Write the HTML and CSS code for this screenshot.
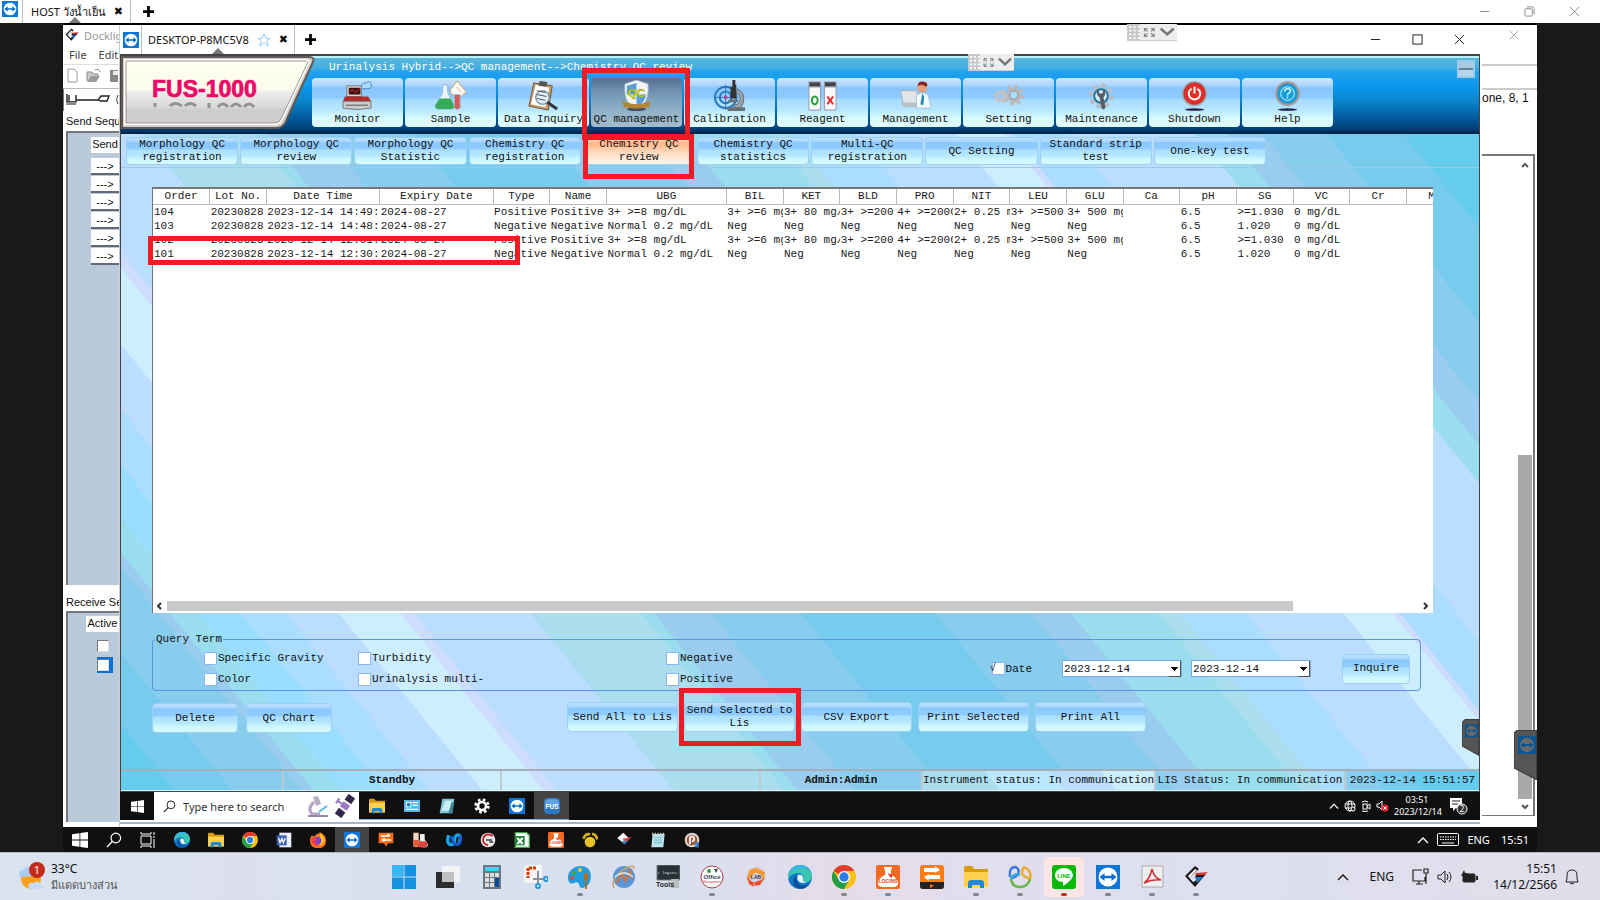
FILE: index.html
```html
<!DOCTYPE html>
<html lang="en">
<head>
<meta charset="utf-8">
<title>FUS-1000 Chemistry QC review</title>
<link rel="stylesheet" href="styles.css">
</head>
<body>
<svg class="defs" aria-hidden="true">
  <symbol id="tv" viewBox="0 0 24 24"><rect width="24" height="24" fill="#0a76d8"/><circle cx="12" cy="12" r="9.5" fill="#fff"/><path d="M3.5 12l5-4v2.7h7V8l5 4-5 4v-2.7h-7V16z" fill="#0a6fd0"/></symbol>
  <symbol id="tvdim" viewBox="0 0 24 24"><rect width="24" height="24" fill="#0b5591"/><circle cx="12" cy="12" r="9.5" fill="#6a6a6a"/><path d="M3.5 12l5-4v2.7h7V8l5 4-5 4v-2.7h-7V16z" fill="#0b5591"/></symbol>
  <symbol id="win10" viewBox="0 0 16 16"><path d="M0 2.3L7.5 1.2V7.6H0zM8.3 1.1L16 0v7.6H8.3zM0 8.4h7.5v6.4L0 13.7zM8.3 8.4H16V16l-7.7-1.1z" fill="#fff"/></symbol>
  <symbol id="search" viewBox="0 0 16 16"><circle cx="9.8" cy="6" r="4.8" fill="none" stroke="currentColor" stroke-width="1.2"/><path d="M6.3 9.5L1 15" stroke="currentColor" stroke-width="1.3"/></symbol>
  <symbol id="folder" viewBox="0 0 24 24"><path d="M0 3q0-2 2-2h6l2 3h14v6H0z" fill="#d99b0a"/><path d="M0 7h24v15H0z" fill="#ffd04c"/><path d="M4 23v-5q0-3 3-3h10q3 0 3 3v5h-4v-3H8v3z" fill="#2387d8"/></symbol>
  <symbol id="edge" viewBox="0 0 24 24"><circle cx="12" cy="12" r="12" fill="#1479c9"/><path d="M0 11C1 4 6 0 12 0c7 0 12 5 12 11 0 4-3 6-7 6-2 0-3-1-2-2 2-4-1-7-5-7-5 0-9 3-10 7z" fill="#3ac6b0"/><path d="M1 9C3 3 8 0 13 0c6 0 9 4 10 7-5-5-15-5-22 2z" fill="#38b5e6"/><path d="M9 10c-2 5 1 12 9 10 2 0 3-1 4-2-3 5-8 7-13 5C4 20 4 13 9 10z" fill="#0d4f9c"/><path d="M10 10c3-1 6 1 5 4-1 2 1 3 4 3-5 3-12-1-9-7z" fill="#e5f3fb"/></symbol>
  <symbol id="chrome" viewBox="0 0 24 24"><circle cx="12" cy="12" r="12" fill="#fbc116"/><path d="M12 12L1.6 6A12 12 0 0 1 22.4 6H12z" fill="#e33b2e"/><path d="M1.6 6A12 12 0 0 0 12 24l5.2-9L12 12 6 13.5z" fill="#22a047"/><circle cx="12" cy="12" r="6" fill="#fff"/><circle cx="12" cy="12" r="4.7" fill="#2f7de9"/></symbol>
  <symbol id="logins" viewBox="0 0 24 24"><rect width="24" height="24" rx="2" fill="#f4691e"/><path d="M8 2h8v2h-1v6q7 3 7 8 0 4-5 4H7q-5 0-5-4 0-5 7-8V4H8z" fill="#fff"/><path d="M12 8l4 2v3l-3-2z" fill="#d33"/><text x="12" y="18" text-anchor="middle" font-size="5" font-weight="700" font-family="Liberation Sans" fill="#d8461a">LOGINS</text></symbol>
  <symbol id="docklight" viewBox="0 0 24 24"><path d="M11 1l4 3-9 8 4 5 5-5h-4l2-3h9l-11 13L1 11z" fill="#181818"/><path d="M11 4l2 1-7 7 4 4-1 1-5-6z" fill="#fff"/><path d="M12 8l12-1-4 3h-9z" fill="#dc3a32"/><path d="M11 12h8l-6 6z" fill="#2d77bd"/></symbol>
  <symbol id="transfer" viewBox="0 0 24 24"><rect width="24" height="24" rx="3" fill="#ff7d17"/><path d="M0 17h24v4q0 3-3 3H3q-3 0-3-3z" fill="#222"/><path d="M4 3h11V1l5 4-5 3V7H4zM20 14H9v2l-5-4 5-3v1h11z" fill="#fff"/><path d="M10 19l4 2-4 2z" fill="#f62"/></symbol>
  <symbol id="gear" viewBox="0 0 24 24"><circle cx="12" cy="12" r="6" fill="none" stroke="currentColor" stroke-width="4"/><circle cx="12" cy="12" r="9.5" fill="none" stroke="currentColor" stroke-width="4" stroke-dasharray="4 3.46"/></symbol>
  <symbol id="up" viewBox="0 0 12 8"><path d="M1 7l5-5 5 5" fill="none" stroke="currentColor" stroke-width="1.3"/></symbol>
  <symbol id="note" viewBox="0 0 24 24"><path d="M5 1h18l-3 22H1z" fill="#7fc8d8"/><path d="M9 4h12l-3 15H4z" fill="#c9edf2"/><path d="M19 6l4 0-3 17h-6z" fill="#3d8596"/></symbol>
  <symbol id="grip" viewBox="0 0 46 17"><path d="M0 0h46v17H0z" fill="#ededed"/><path d="M0 0h12v17H0z" fill="#c9c9c9"/><g stroke="#fff" stroke-width="2" stroke-dasharray="2 2"><path d="M2 3h10M2 7h10M2 11h10M2 15h10"/></g><path d="M16 8V5h3M22 5h3v3M25 10v3h-3M19 13h-3v-3M16 5l3 3M25 5l-3 3M25 13l-3-3M16 13l3-3" fill="none" stroke="#777"/><path d="M31 5l6 6 6-6" fill="none" stroke="#777" stroke-width="2.5"/></symbol>
</svg>

<header class="tvbar outer">
  <svg class="tvicon"><use href="#tv"/></svg>
  <div class="session host"><span>HOST วังน้ำเย็น</span><button class="x" aria-label="Close tab">✖</button></div>
  <button class="plus" aria-label="New tab"><svg viewBox="0 0 12 12"><path d="M6 0v12M0 6h12" stroke="#000" stroke-width="3"/></svg></button>
  <div class="wincontrols grey">
    <svg viewBox="0 0 12 12"><path d="M1 6h10"/></svg>
    <svg viewBox="0 0 12 12"><rect x="1" y="3" width="8" height="8" rx="1"/><path d="M3 1h6q2 0 2 2v6"/></svg>
    <svg viewBox="0 0 12 12"><path d="M1 1l10 10M11 1L1 11"/></svg>
  </div>
</header>

<main class="remote">
  <svg class="float first" viewBox="0 0 46 17" preserveAspectRatio="none"><use href="#grip"/></svg>
  <div class="desk">
    <aside class="dockleft">
      <div class="docktitle"><svg><use href="#docklight"/></svg><span>Docklight</span></div>
      <nav class="dockmenu"><span>File</span><span>Edit</span></nav>
      <div class="docktools">
        <svg width="52" height="16" viewBox="0 0 52 16"><path d="M2 1h6l3 3v10H2z" fill="#fff" stroke="#999"/><path d="M21 13V4h5l1 2h5v2" fill="#ccc" stroke="#888"/><path d="M21 14l4-6h9l-4 6z" fill="#999"/><path d="M29 2q4-2 5 2" fill="none" stroke="#888"/><path d="M44 2h8v12h-7l-1-1z" fill="#888"/><path d="M47 3h5v4h-5z" fill="#eee"/></svg>
      </div>
      <div class="dockconn"><svg width="56" height="16" viewBox="0 0 56 16"><path d="M3 2v8h9V3M5 3v6M12 8h22M34 8l3-4h8l-2 5h-6z" fill="none" stroke="#222" stroke-width="1.4"/><path d="M3 10h9v3H2z" fill="#888"/><path d="M54 3q-3 5 0 9" stroke="#444" fill="none"/></svg></div>
      <h2>Send Sequences</h2>
      <div class="well send">
        <div class="cell">Send</div>
        <button>---&gt;</button><button>---&gt;</button><button>---&gt;</button><button>---&gt;</button><button>---&gt;</button><button>---&gt;</button>
      </div>
      <h2 class="rec">Receive Sequences</h2>
      <div class="well receive">
        <div class="cell">Active</div>
        <input type="checkbox" aria-label="Sequence 1 active"><input type="checkbox" class="sel" aria-label="Sequence 2 active">
      </div>
    </aside>

    <section class="inner">
      <header class="tvbar">
        <svg class="tvicon"><use href="#tv"/></svg>
        <div class="session desktop"><span>DESKTOP-P8MC5V8</span><svg class="star" viewBox="0 0 16 16"><path d="M8 1l2 5h5l-4 3 2 6-5-4-5 4 2-6-4-3h5z" fill="none" stroke="#85c1ef"/></svg><button class="x" aria-label="Close tab">✖</button></div>
        <button class="plus" aria-label="New tab"><svg viewBox="0 0 12 12"><path d="M6 0v12M0 6h12" stroke="#000" stroke-width="3"/></svg></button>
        <div class="wincontrols">
          <svg viewBox="0 0 12 12"><path d="M1 6h10"/></svg>
          <svg viewBox="0 0 12 12"><rect x="1" y="1" width="10" height="10"/></svg>
          <svg viewBox="0 0 12 12"><path d="M1 1l10 10M11 1L1 11"/></svg>
        </div>
      </header>

      <div class="app">
        <svg class="float second" viewBox="0 0 46 17" preserveAspectRatio="none"><use href="#grip"/></svg>
        <div class="head">
          <svg class="logo" viewBox="0 0 194 74" role="img" aria-label="FUS-1000">
            <defs><linearGradient id="lg" x2="0" y2="1"><stop offset="0" stop-color="#fffff4"/><stop offset=".47" stop-color="#fbfbe8"/><stop offset=".5" stop-color="#ececec"/><stop offset=".74" stop-color="#d8d8d8"/><stop offset=".77" stop-color="#cdcdcd"/><stop offset="1" stop-color="#cfcfcf"/></linearGradient></defs>
            <path d="M1 1h187q6 0 4 5l-28 61q-3 5-9 5H1z" fill="#d4d0cc" stroke="#5f5a58" stroke-width="2"/>
            <path d="M4 4h181q4 0 2 4l-26 55q-2 5-7 5H4z" fill="url(#lg)" stroke="#fff" stroke-width="2"/>
            <path d="M5 5h179q4 0 2 3l-26 55q-2 4-6 4H5z" fill="none" stroke="#867e7b" stroke-width=".8"/>
            <text x="31" y="41" font-size="23" font-weight="700" font-family="Liberation Sans, sans-serif" fill="#ec0868" stroke="#ec0868" stroke-width=".7">FUS-1000</text>
            <path d="M34 47v4M49 50q5-5 12 0M64 50q5-5 11 0M88 47v5M97 51q5-6 10 0M110 51q5-6 10 0M123 51q5-6 10 0" fill="none" stroke="#929292" stroke-width="3"/>
          </svg>
          <div class="headmain">
            <p class="crumb">Urinalysis Hybrid--&gt;QC management--&gt;Chemistry QC review</p>
            <nav class="mainnav">
              <button><svg viewBox="0 0 32 32"><path d="M20 7q1-5 5-4 4-3 5 1 2 4-3 5h-6" fill="#a7dcff" stroke="#468ac0"/><path d="M5 6h15v11H5z" fill="#d8d8d8" stroke="#777"/><path d="M7 8h12v7H7z" fill="#3b1010"/><path d="M8 12l3-2 3 3 4-4" stroke="#f22" fill="none"/><path d="M3 17h24l3 5H1z" fill="#b32a2a"/><path d="M1 22h29v7q-14 3-29 0z" fill="#ccc" stroke="#777"/><path d="M4 26h23" stroke="#555"/></svg>Monitor</button>
              <button><svg viewBox="0 0 32 32"><path d="M16 10l7-9 9 11-8 8-8-7z" fill="#fff" stroke="#d59c4b"/><path d="M22 7l5 6" stroke="#e2a75d"/><path d="M8 5h5v8l7 13q0 4-4 4H3q-4-1-2-5l7-12z" fill="#e9f5fb" stroke="#8abbdc"/><path d="M5 19h11l4 8q-1 3-4 3H3q-4-1-2-5z" fill="#35ac57"/><path d="M20 15h6v14q-3 3-6 0z" fill="#d65955" stroke="#9fbcd0"/></svg>Sample</button>
              <button><svg viewBox="0 0 32 32"><path d="M6 3l19 3-4 25L1 27z" fill="#c99d66" stroke="#765433"/><path d="M8 5l14 3-4 20L3 25z" fill="#fff"/><path d="M12 1l8 1-1 5-8-1z" fill="#555"/><circle cx="15" cy="18" r="7" fill="#e3f0fc" stroke="#8399ad" stroke-width="1.5"/><path d="M9 11l9 2M9 15l10 2M9 19l9 2" stroke="#456"/><path d="M20 23l10 7" stroke="#333" stroke-width="3"/></svg>Data Inquiry</button>
              <button class="on marked"><svg viewBox="0 0 32 32"><ellipse cx="16" cy="30" rx="10" ry="2" fill="#44505a"/><path d="M16 0l12 4q1 15-4 20-3 4-8 5-6-2-9-6Q3 17 4 4z" fill="#f4f7fa" stroke="#9daab6"/><path d="M16 3v12H6V6zM16 15h10q-1 9-10 12z" fill="#5a9fdb"/><path d="M1 22l5 1q10 4 20 0l5-1-2 4 1 3-5-1q-9 3-18 0l-5 1 1-3z" fill="#b68432"/><text x="16" y="18" text-anchor="middle" font-size="12" font-weight="700" font-family="Liberation Sans" fill="#d8de18" stroke="#879015" stroke-width=".4">QC</text></svg>QC management</button>
              <button><svg viewBox="0 0 32 32"><g fill="none" stroke="#2878bd"><circle cx="12" cy="18" r="11" stroke-width="2"/><circle cx="12" cy="18" r="6" stroke-width="2"/><path d="M12 5v26M0 18h25"/></g><circle cx="12" cy="18" r="2" fill="#b147a0"/><path d="M19 0h3v5h1v14h-6V7h2z" fill="#333"/><path d="M24 9q9 5 6 15-1 4-4 5h-5v-3q6-1 6-7 0-4-4-6z" fill="#9ba5ad" stroke="#606970"/><path d="M15 20h10v3H15zM14 28h18v4H14z" fill="#667078"/></svg>Calibration</button>
              <button><svg viewBox="0 0 32 32"><g stroke="#99a"><path d="M2 7h12v24H2zM18 7h12v24H18z" fill="#f8f8f8"/><path d="M2 2h12v5H2zM18 2h12v5H18z" fill="#444"/></g><ellipse cx="8" cy="21" rx="3" ry="4" fill="none" stroke="#20a034" stroke-width="2"/><path d="M21 17l6 8M27 17l-6 8" stroke="#e22323" stroke-width="2"/></svg>Reagent</button>
              <button><svg viewBox="0 0 32 32"><path d="M1 11h16l3 13H3z" fill="#e2e5e8" stroke="#aab0b4"/><path d="M0 24h18l3 4H5z" fill="#b8c0c7"/><circle cx="23" cy="8" r="5" fill="#e4a07d"/><path d="M18 6q1-6 8-4 4 2 1 5l-4-2z" fill="#8c241c"/><path d="M17 16q5-5 12-1l3 14H17z" fill="#f3faff" stroke="#a9c3d4"/><path d="M23 14l2 3-1 9-3-1z" fill="#278cb4"/></svg>Management</button>
              <button><svg viewBox="0 0 38 32"><g color="#b9b9b9"><use href="#gear" x="12" y="2" width="27" height="27"/></g><g color="#c4c4c4"><use href="#gear" x="0" y="8" width="18" height="18"/></g><circle cx="25.5" cy="15.500" r="5" fill="#aedcff" stroke="#888"/></svg>Setting</button>
              <button><svg viewBox="0 0 32 32"><g color="#b7bec6"><use href="#gear" x="2" y="3" width="27" height="27"/></g><circle cx="15.500" cy="16.500" r="7" fill="#d8eeff" stroke="#1778a4" stroke-width="2"/><path d="M12 9l2 5h3l1-5q4 5 0 9l2 10q-2 4-4 1l-2-11q-5-4-2-9z" fill="#555c64"/></svg>Maintenance</button>
              <button><svg viewBox="0 0 32 32"><ellipse cx="16" cy="30.500" rx="10" ry="1.300" fill="#224"/><circle cx="16" cy="14" r="13" fill="#a5a5ab"/><circle cx="16" cy="14" r="11" fill="#e52c28" stroke="#ad3431"/><path d="M13 9a6 6 0 1 0 6 0M16 7v7" fill="none" stroke="#fff" stroke-width="2"/></svg>Shutdown</button>
              <button><svg viewBox="0 0 32 32"><ellipse cx="16" cy="30.500" rx="10" ry="1.300" fill="#224"/><circle cx="16" cy="14" r="13" fill="#a5a5ab"/><circle cx="16" cy="14" r="11" fill="#149edb" stroke="#b98575"/><circle cx="16" cy="14" r="7" fill="none" stroke="#d7f6ff"/><path d="M13 12q0-3 3-3 4 0 3 3l-3 3v1M16 17v2" fill="none" stroke="#d7f6ff" stroke-width="1.500"/></svg>Help</button>
            </nav>
          </div>
          <button class="mini" aria-label="Minimise"></button>
        </div>

        <nav class="subnav">
          <button>Morphology QC registration</button><button>Morphology QC review</button><button>Morphology QC Statistic</button><button>Chemistry QC registration</button><button class="on marked">Chemistry QC review</button><button>Chemistry QC statistics</button><button>Multi-QC registration</button><button>QC Setting</button><button>Standard strip test</button><button>One-key test</button>
        </nav>

        <div class="work">
          <div class="list">
            <div class="rowmark"></div>
            <div class="scroller">
            <table>
              <colgroup><col class="n"><col class="n"><col class="w"><col class="w"><col class="n"><col class="n"><col class="u"><col class="n" span="13"></colgroup>
              <thead><tr><th>Order</th><th>Lot No.</th><th>Date Time</th><th>Expiry Date</th><th>Type</th><th>Name</th><th>UBG</th><th>BIL</th><th>KET</th><th>BLD</th><th>PRO</th><th>NIT</th><th>LEU</th><th>GLU</th><th>Ca</th><th>pH</th><th>SG</th><th>VC</th><th>Cr</th><th>MA</th></tr></thead>
              <tbody>
                <tr><td>104</td><td>20230828</td><td>2023-12-14 14:49:0</td><td>2024-08-27</td><td>Positive</td><td>Positive</td><td>3+ &gt;=8 mg/dL</td><td>3+ &gt;=6 mg</td><td>3+ 80 mg/</td><td>3+ &gt;=200</td><td>4+ &gt;=2000</td><td>2+ 0.25 m</td><td>3+ &gt;=500</td><td>3+ 500 mg</td><td></td><td>6.5</td><td>&gt;=1.030</td><td>0 mg/dL</td><td></td><td></td></tr>
                <tr><td>103</td><td>20230828</td><td>2023-12-14 14:48:1</td><td>2024-08-27</td><td>Negative</td><td>Negative</td><td>Normal 0.2 mg/dL</td><td>Neg</td><td>Neg</td><td>Neg</td><td>Neg</td><td>Neg</td><td>Neg</td><td>Neg</td><td></td><td>6.5</td><td>1.020</td><td>0 mg/dL</td><td></td><td></td></tr>
                <tr><td>102</td><td>20230828</td><td>2023-12-14 12:31:0</td><td>2024-08-27</td><td>Positive</td><td>Positive</td><td>3+ &gt;=8 mg/dL</td><td>3+ &gt;=6 mg</td><td>3+ 80 mg/</td><td>3+ &gt;=200</td><td>4+ &gt;=2000</td><td>2+ 0.25 m</td><td>3+ &gt;=500</td><td>3+ 500 mg</td><td></td><td>6.5</td><td>&gt;=1.030</td><td>0 mg/dL</td><td></td><td></td></tr>
                <tr><td>101</td><td>20230828</td><td>2023-12-14 12:30:3</td><td>2024-08-27</td><td>Negative</td><td>Negative</td><td>Normal 0.2 mg/dL</td><td>Neg</td><td>Neg</td><td>Neg</td><td>Neg</td><td>Neg</td><td>Neg</td><td>Neg</td><td></td><td>6.5</td><td>1.020</td><td>0 mg/dL</td><td></td><td></td></tr>
              </tbody>
            </table>
            </div>
            <div class="hbar"><svg viewBox="0 0 6 8"><path d="M5 1L2 4l3 3"/></svg><div class="track"><div class="thumb"></div></div><svg viewBox="0 0 6 8"><path d="M1 1l3 3-3 3"/></svg></div>
          </div>

          <fieldset class="query">
            <legend>Query Term</legend>
            <div class="checks">
              <label><input type="checkbox">Specific Gravity</label><label><input type="checkbox">Turbidity</label><label><input type="checkbox">Negative</label>
              <label><input type="checkbox">Color</label><label><input type="checkbox">Urinalysis multi-</label><label><input type="checkbox">Positive</label>
            </div>
            <label class="datecheck"><input type="checkbox" checked>Date</label>
            <div class="pick"><select aria-label="From date"><option>2023-12-14</option></select></div>
            <div class="pick"><select aria-label="To date"><option>2023-12-14</option></select></div>
            <button class="glossy inquire">Inquire</button>
          </fieldset>

          <div class="actions">
            <div class="group small"><button class="glossy">Delete</button><button class="glossy">QC Chart</button></div>
            <div class="group big"><button class="glossy">Send All to Lis</button><button class="glossy marked">Send Selected to Lis</button><button class="glossy">CSV Export</button><button class="glossy">Print Selected</button><button class="glossy">Print All</button></div>
          </div>
        </div>
        <svg class="sidetab small" viewBox="0 0 18 38"><path d="M18 0H3L0 3v25l18 10z" fill="#555" stroke="#333"/><use href="#tvdim" x="3" y="5" width="14" height="14"/></svg>

        <footer class="status"><span></span><b>Standby</b><span></span><b>Admin:Admin</b><span class="s1">Instrument status: In communication</span><span>LIS Status: In communication</span><span class="s2">2023-12-14 15:51:57</span></footer>
      </div>

      <div class="bar10 inner10">
        <button class="start" aria-label="Start"><svg width="13" height="13"><use href="#win10"/></svg></button>
        <label class="searchbox"><svg width="13" height="13"><use href="#search"/></svg><input type="text" placeholder="Type here to search" aria-label="Search">
          <svg width="52" height="24" viewBox="0 0 52 24"><path d="M8 3l5-1 3 8-5 2z" fill="#b8abc4"/><path d="M9 8q-7 6-2 12h8" fill="none" stroke="#b7a6c8" stroke-width="3"/><path d="M3 21h20v2H3z" fill="#9885aa"/><path d="M14 18l8-6" stroke="#56bde9" stroke-width="2"/><g transform="rotate(35 40 12)"><path d="M36 0h8v7h-8zM36 17h8v7h-8z" fill="#35264c"/><path d="M36 9h8v6h-8z" fill="#9a77c4"/><path d="M36 12h-4M31 9v6" stroke="#9a77c4" stroke-width="2"/></g></svg></label>
        <div class="apps">
          <i class="open"><svg><use href="#folder"/></svg></i>
          <i class="open"><svg viewBox="0 0 24 24"><path d="M0 3h24v18H0z" fill="#54b8f0"/><path d="M3 6h8v8H3z" fill="#fff"/><circle cx="7" cy="10" r="3" fill="#247cc0"/><path d="M13 7h8M13 11h8M3 17h18" stroke="#fff" stroke-width="2"/></svg></i>
          <i class="open"><svg><use href="#note"/></svg></i>
          <i class="open white"><svg><use href="#gear"/></svg></i>
          <i class="open"><svg><use href="#tv"/></svg></i>
          <i class="open active"><svg viewBox="0 0 24 24"><rect width="24" height="24" rx="6" fill="#2f78c8"/><path d="M2 11q10 6 20 0V5q-1-3-4-3H6Q3 2 2 5z" fill="#60a5e3"/><text x="12" y="16" text-anchor="middle" font-size="10" font-weight="700" font-family="Liberation Sans" fill="#fff">FUS</text></svg></i>
        </div>
        <div class="tray">
          <svg width="10" height="8"><use href="#up"/></svg>
          <svg width="12" height="12" viewBox="0 0 12 12" fill="none" stroke="#fff"><circle cx="6" cy="6" r="5"/><ellipse cx="6" cy="6" rx="2" ry="5"/><path d="M1 4h10M1 8h10"/><circle cx="9" cy="9" r="2" fill="#222"/></svg>
          <svg width="10" height="12" viewBox="0 0 10 12" fill="none" stroke="#fff"><rect x="2" y="4" width="4" height="5"/><path d="M6 6l3-2v5L6 7M1 2q3-2 6 0M1 11q3 1 6 0"/></svg>
          <svg width="13" height="12" viewBox="0 0 13 12"><path d="M1 4h2l3-3v9L3 7H1z" fill="none" stroke="#fff"/><circle cx="9" cy="8" r="3.5" fill="#e22"/><path d="M7.5 6.500l3 3m0-3l-3 3" stroke="#fff"/></svg>
          <time>03:51<br>2023/12/14</time>
          <svg class="bubble" width="20" height="20" viewBox="0 0 20 20"><path d="M2 2h12v10H8l-3 3v-3H2z" fill="#fff"/><path d="M4 5h8M4 8h6" stroke="#222"/><circle cx="14" cy="13" r="5" fill="#333" stroke="#fff"/><text x="14" y="16" text-anchor="middle" font-size="8" fill="#fff" font-family="Noto Sans">2</text></svg>
        </div>
      </div>
      <div class="under"></div>
    </section>

    <aside class="dockright">
      <div class="closeline"><svg viewBox="0 0 12 12"><path d="M1 1l10 10M11 1L1 11"/></svg></div>
      <div class="lines"></div>
      <p>one, 8, 1</p>
      <div class="vwell"><svg viewBox="0 0 8 6"><path d="M1 5l3-3 3 3"/></svg><div class="vtrack"><div class="vthumb"></div></div><svg viewBox="0 0 8 6"><path d="M1 1l3 3 3-3"/></svg></div>
      <svg class="sidetab" viewBox="0 0 23 50"><path d="M23 0H3L0 3v35l23 12z" fill="#555" stroke="#333"/><use href="#tvdim" x="4" y="6" width="18" height="18"/></svg>
    </aside>
  </div>

  <div class="bar10 outer10">
    <div class="apps">
      <i><svg><use href="#win10"/></svg></i>
      <i class="white"><svg><use href="#search"/></svg></i>
      <i><svg viewBox="0 0 16 16" fill="none" stroke="#fff"><path d="M1 4h10v8H1zM1 0v2h10V0M1 16v-2h10v2M14 0v3M14 7v9"/><path d="M13 5h2"/></svg></i>
      <i><svg><use href="#edge"/></svg></i><i><svg><use href="#folder"/></svg></i><i><svg><use href="#chrome"/></svg></i>
      <i><svg viewBox="0 0 24 24"><path d="M5 1h18v22H5z" fill="#e8eefb"/><path d="M1 5h15v15H1z" fill="#3c62b0"/><path d="M4 9l2 7 3-6 2 6 3-7M17 6h4M17 10h4M17 14h4" fill="none" stroke="#fff" stroke-width="2"/></svg></i>
      <i><svg viewBox="0 0 24 24"><path d="M3 5l3 2q4-5 9-5l-1-2q10 4 10 13 0 11-12 11T0 13q0-5 3-8z" fill="#ff7a1c"/><path d="M14 1q9 6 7 14-2 5-9 5-3-2 3-4 4-3 0-8z" fill="#ffca2c"/><circle cx="11" cy="13" r="6" fill="#7b45c6"/><path d="M2 8l9 2-1 3-3 1q2 6 8 5-4 4-9 1-5-4-4-12z" fill="#f33f45"/></svg></i>
      <i class="active"><svg><use href="#tv"/></svg></i>
      <i><svg viewBox="0 0 24 24"><path d="M1 1h22v16h-8l-3 5-3-5H1z" fill="#f76c15"/><path d="M4 6h13m-3-3l4 3M20 12H7m3-3l-4 3 4 2" stroke="#fff" fill="none" stroke-width="2"/></svg></i>
      <i><svg viewBox="0 0 24 24"><path d="M2 1h8v20q-4 4-8 0z" fill="#f0d9c4"/><path d="M2 12h8v10H2z" fill="#e45a35"/><path d="M12 3h7v8l5 8q-1 5-8 4-8 0-7-5l3-6z" fill="#eee"/><path d="M11 14h11q4 8-5 9t-8-5z" fill="#df433e"/></svg></i>
      <i><svg viewBox="0 0 24 24"><path d="M4 5q-4 12 3 14 6 0 6-9 2-7 7-5 3 3-1 12" fill="none" stroke="#16a6dc" stroke-width="5"/><path d="M8 6q2 13 8 13 8-1 5-14" fill="none" stroke="#1757d6" stroke-width="4"/></svg></i>
      <i><svg viewBox="0 0 24 24"><circle cx="12" cy="12" r="11" fill="#eee"/><path d="M19 6Q9 0 5 9q-2 9 7 11" fill="none" stroke="#cc2430" stroke-width="3"/><path d="M9 12h9M14 15h6" stroke="#666" stroke-width="3"/></svg></i>
      <i><svg viewBox="0 0 24 24"><path d="M2 1h17l4 4v18H2z" fill="#fff" stroke="#42a048" stroke-width="2"/><path d="M2 6h14v14H2z" fill="#23803a"/><path d="M5 9l8 9m0-9l-8 9" stroke="#fff" stroke-width="3"/></svg></i>
      <i><svg><use href="#logins"/></svg></i>
      <i><svg viewBox="0 0 24 24"><circle cx="12" cy="15" r="8" fill="#e9c22b"/><path d="M2 10q4-9 10-6M15 3q6 0 8 8" fill="none" stroke="#d9b11d" stroke-width="4"/></svg></i>
      <i><svg viewBox="0 0 24 24"><path d="M11 1l8 8-8 8-9-8z" fill="#fff"/><path d="M10 10l13-2-8 8z" fill="#e13d3b"/><path d="M9 13h9l-6 6z" fill="#3d83d0"/></svg></i>
      <i><svg viewBox="0 0 24 24"><path d="M4 3h18l-2 20H2z" fill="#b9e5ee"/><path d="M7 8h12M6 12h12M6 16h12" stroke="#5ba2b5"/><path d="M4 1v4M8 1v4M12 1v4M16 1v4M20 1v4" stroke="#ccc" stroke-width="2"/></svg></i>
      <i><svg viewBox="0 0 24 24"><circle cx="12" cy="12" r="11" fill="#d7d7d7"/><circle cx="12" cy="12" r="8" fill="#9a5a36"/><path d="M9 18V8q5-3 6 1t-3 5" fill="none" stroke="#e8e8e8" stroke-width="3"/><path d="M17 15h5v8h-5z" fill="#3f84d6"/></svg></i>
    </div>
    <div class="tray"><svg width="12" height="8"><use href="#up"/></svg><svg width="22" height="13" viewBox="0 0 22 13"><rect x=".5" y=".5" width="21" height="12" rx="1" fill="none" stroke="#fff"/><path d="M3 4h16M3 6.500h16" stroke="#fff" stroke-dasharray="1.500 1"/><path d="M5 10h12" stroke="#fff"/></svg><span>ENG</span><span>15:51</span></div>
  </div>
</main>

<footer class="bar11">
  <div class="weather">
    <svg width="28" height="30" viewBox="0 0 28 30"><circle cx="13" cy="17" r="10" fill="#f9a11f"/><path d="M2 15q-3-6 3-7 4-6 9 0 5 0 4 6z" fill="#a9cdf5"/><path d="M13 27q-4-1-2-5 3-2 5-1 4-4 7 2 4 3 0 4z" fill="#c5dbf8"/><circle cx="19" cy="8" r="8" fill="#c42b1c"/><text x="19" y="12" text-anchor="middle" font-size="11" fill="#fff" font-family="Noto Sans">1</text></svg>
    <div>33°C<small>มีแดดบางส่วน</small></div>
  </div>
  <div class="dock">
    <i><svg viewBox="0 0 24 24"><path d="M0 0h11.500v11.500H0zM12.500 0H24v11.500H12.500zM0 12.500h11.500V24H0zM12.500 12.500H24V24H12.500z" fill="#1592e2"/><path d="M0 0h11.500v11.500H0z" fill="#39b7f5"/></svg></i>
    <i><svg viewBox="0 0 24 24"><path d="M0 7h18v16H0z" fill="#2c2c2c"/><path d="M6 1h18v16H6z" fill="#f4f4f4"/><path d="M6 7h12v10H6z" fill="#c1c1c1"/></svg></i>
    <i><svg viewBox="0 0 24 24"><path d="M3 0h18v24H3z" fill="#6b7783"/><path d="M5 2h14v4H5z" fill="#42d1f2"/><path d="M5 8h4v4H5zM10 8h4v4h-4zM15 8h4v4h-4zM5 13h4v4H5zM10 13h4v4h-4zM5 18h4v4H5zM10 18h4v4h-4z" fill="#ddd"/><path d="M15 13h4v9h-4z" fill="#0c4894"/></svg></i>
    <i><svg viewBox="0 0 24 24"><rect width="18" height="18" rx="2" fill="#f5f5f5"/><path d="M12 3H4v10" fill="none" stroke="#d83b01" stroke-width="3" stroke-dasharray="3 1"/><path d="M14 6v14M9 14h12" stroke="#87929c" stroke-width="2"/><circle cx="22" cy="14" r="2" fill="#fff" stroke="#2298df" stroke-width="2"/><circle cx="14" cy="21" r="2" fill="#fff" stroke="#2298df" stroke-width="2"/></svg></i>
    <i class="run"><svg viewBox="0 0 24 24"><path d="M13 1C5 1-1 7 0 14q1 6 6 4 4-2 5 1 0 4 4 4 8-3 8-12-1-10-10-10z" fill="#219ddd"/><circle cx="4" cy="13" r="2" fill="#d84b30"/><circle cx="6" cy="8" r="2" fill="#43a83d"/><circle cx="12" cy="5" r="2" fill="#ffc62c"/><path d="M16 8h4v7h-1v9h-2v-9h-1z" fill="#b36b1f"/></svg></i>
    <i><svg viewBox="0 0 24 24"><circle cx="12" cy="12" r="11" fill="#5a97d6"/><path d="M5 18l5-11 3 9 5-10 2 8" fill="none" stroke="#d4733a" stroke-width="2"/><path d="M2 23Q-2 15 11 5 23-2 22 4" fill="none" stroke="#d2a45c" stroke-width="1.500"/><path d="M3 12q9-8 18 0" stroke="#d9edff" fill="none" stroke-width="1.500"/></svg></i>
    <i><svg viewBox="0 0 24 24"><path d="M1 0h23v15H1z" fill="#263238" stroke="#777"/><path d="M15 14h8v9h-8z" fill="#bbb"/><text x="12" y="9" text-anchor="middle" font-size="4" fill="#ddd" font-family="Liberation Mono">&gt; logins:</text><text x="9" y="22" text-anchor="middle" font-size="7" font-weight="700" fill="#222" font-family="Liberation Sans">Tools</text></svg></i>
    <i class="run"><svg viewBox="0 0 24 24"><circle cx="12" cy="12" r="11" fill="#fff" stroke="#a53b48"/><circle cx="9" cy="6" r="2" fill="#35a249"/><path d="M14 4h4l-2 4z" fill="#444"/><text x="12" y="14" text-anchor="middle" font-size="6" font-weight="700" fill="#345" font-family="Liberation Sans">Office</text><text x="12" y="18" text-anchor="middle" font-size="3" fill="#c34" font-family="Liberation Sans">Management</text></svg></i>
    <i><svg viewBox="0 0 24 24"><circle cx="12" cy="12" r="10" fill="#cfd6e8"/><path d="M5 5l10-3-3 5-5 5-4 3zM15 4l6 3-1 9-3-6-6-3z" fill="#f59a35"/><path d="M21 12l-5 8-7 1 2-4 6-2zM3 11l2 8 5 3 1-4-4-2z" fill="#ee4b28"/><text x="12" y="14" text-anchor="middle" font-size="5" font-weight="700" fill="#333" font-family="Liberation Sans">LAB</text></svg></i>
    <i><svg><use href="#edge"/></svg></i>
    <i class="run"><svg><use href="#chrome"/></svg></i>
    <i class="run"><svg><use href="#logins"/></svg></i>
    <i><svg><use href="#transfer"/></svg></i>
    <i class="run"><svg><use href="#folder"/></svg></i>
    <i class="run"><svg viewBox="0 0 24 24" fill="none" stroke-width="2.500"><path d="M2 12Q1 2 7 2q5 1 3 8l-7 4" stroke="#4178e0"/><path d="M14 9q0-8 4-6 6 4 4 11l-6-3z" stroke="#e9ad32"/><path d="M3 14q1 8 9 8t10-8" stroke="#65b949"/><path d="M3 14q2-5 9-5" stroke="#32a9dc"/></svg></i>
    <i class="run line"><svg viewBox="0 0 24 24"><rect width="24" height="24" rx="3" fill="#06b906"/><path d="M12 3c-6 0-9 4-9 7 0 4 3 7 8 7v4q8-5 10-10c0-5-4-8-9-8z" fill="#fff"/><text x="12" y="13" text-anchor="middle" font-size="6" font-weight="700" fill="#06b906" font-family="Liberation Sans">LINE</text></svg></i>
    <i class="run"><svg><use href="#tv"/></svg></i>
    <i class="run"><svg viewBox="0 0 24 24"><path d="M2 1h21v21H2z" fill="#efefef" stroke="#aaa"/><path d="M4 18q6-4 8-14 2 9 9 11Q12 14 4 18z" fill="none" stroke="#d12e35" stroke-width="1.500"/></svg></i>
    <i class="run"><svg><use href="#docklight"/></svg></i>
  </div>
  <div class="tray11">
    <svg width="12" height="8"><use href="#up"/></svg><span class="lang">ENG</span>
    <svg width="17" height="18" viewBox="0 0 17 18" fill="none" stroke="#222" stroke-width="1.200"><path d="M10 2H1v11h12V9M4 16h7M7 13v3M12 1h4v4h-4zM14 5v11"/></svg>
    <svg width="16" height="14" viewBox="0 0 16 14" fill="none" stroke="#222"><path d="M1 5h3l4-4v12L4 9H1zM10 4q2 3 0 6M12 2q4 5 0 10"/></svg>
    <svg width="17" height="14" viewBox="0 0 17 14"><rect x="2" y="4" width="12" height="8" rx="1" fill="#222" stroke="#222"/><path d="M15 6h2v4h-2zM3 0L0 6h3L2 9l5-6H4z" fill="#222"/></svg>
    <time>15:51<br>14/12/2566</time>
    <svg width="14" height="16" viewBox="0 0 14 16" fill="none" stroke="#222"><path d="M2 10V6q0-5 5-5t5 5v4l1 3H1zM5 14q2 2 4 0"/></svg>
  </div>
</footer>
</body>
</html>
```
FILE: styles.css
```css
* { box-sizing: border-box; }
body { margin: 0; min-height: 100vh; display: flex; flex-direction: column; background: #191919; font-family: "Noto Sans", sans-serif; font-size: 11px; color: #111; }
button, input, select { font: inherit; color: inherit; padding: 0; margin: 0; }
button { border: 0; background: none; }
i { font-style: normal; }
.defs { position: absolute; width: 0; height: 0; }

/* session tab bars */
.tvbar { height: 29px; display: flex; align-items: center; background: #fff; flex: none; }
.tvicon { width: 16px; height: 16px; margin-left: 3px; }
.session { display: flex; align-items: center; height: 100%; border-left: 1px solid #bbb; border-right: 1px solid #bbb; position: relative; margin-left: 2px; padding: 0 8px; gap: 8px; white-space: nowrap; }
.session::after { content: ""; position: absolute; bottom: 0; left: 50%; border: 6px solid transparent; border-top: 0; border-bottom-color: #777; }
.star { width: 14px; height: 14px; flex: none; }
.x { font-size: 11px; line-height: 1; font-family: "DejaVu Sans", sans-serif; }
.plus { width: 12px; height: 12px; margin-left: 10px; display: flex; }
.plus svg { width: 11px; height: 11px; }
.wincontrols { margin-left: auto; display: flex; gap: 31px; margin-right: 15px; }
.wincontrols svg { width: 11px; height: 11px; fill: none; stroke: #111; }
.outer { height: 23px; }
.outer .tvicon { margin: 0 4px 6px 2px; }
.outer .plus { margin-left: 12px; }
.host { width: 109px; margin: 0; justify-content: space-between; }
.host::after { left: 46px; }
.desktop { width: 154px; padding: 0 6px; justify-content: space-between; gap: 4px; }
.desktop::after { left: 70px; }
.outer .wincontrols { gap: 34px; margin-right: 20px; }
.grey svg { stroke: #888; }

.remote { flex: 1; margin: 0 63px; border-top: 2px solid #000; display: flex; flex-direction: column; position: relative; }
.float { position: absolute; z-index: 3; width: 46px; height: 17px; border-bottom: 1px solid #ccc; }
.float.first { width: 50px; right: 360px; top: -1px; }
.float.second { right: 465px; top: -2px; }
.desk { flex: 1; display: flex; background: #fff; }

/* Docklight, left strip */
.dockleft { width: 57px; flex: none; overflow: hidden; font-family: "Liberation Sans", Arial, sans-serif; font-size: 11px; display: flex; flex-direction: column; white-space: nowrap; border-right: 1px solid #ccc; }
.docktitle { display: flex; align-items: center; height: 20px; gap: 5px; padding-left: 2px; color: #999; font-family: "Noto Sans", sans-serif; }
.docktitle svg { width: 14px; height: 14px; flex: none; }
.dockmenu { display: flex; gap: 12px; height: 20px; align-items: center; padding-left: 6px; font-family: "Noto Sans", sans-serif; color: #444; border-bottom: 1px solid #ddd; }
.docktools { height: 24px; padding: 3px; border-bottom: 1px solid #bbb; }
.dockconn { height: 22px; padding: 3px 0; border-left: 1px solid #777; }
.dockleft h2 { font-size: 11px; font-weight: 400; margin: 0; padding-left: 3px; line-height: 20px; }
.well { margin-left: 3px; background: #b9cadb; border-left: 2px solid #777; border-top: 2px solid #777; display: flex; flex-direction: column; align-items: flex-end; }
.send { height: 454px; padding-top: 4px; }
.cell { background: #fff; width: 28px; height: 16px; line-height: 14px; text-align: center; margin-bottom: 5px; overflow: hidden; }
.well button { width: 28px; height: 17px; background: #fff; border-bottom: 2px solid #667; margin-bottom: 1px; line-height: 14px; flex: none; }
.dockleft .rec { line-height: 18px; padding-top: 8px; }
.receive { flex: 1; margin-bottom: 5px; padding-top: 3px; }
.receive .cell { width: 33px; margin-bottom: 8px; }
.receive input { appearance: none; width: 12px; height: 12px; background: #fff; border: 1px solid #777; border-right-color: #ddd; border-bottom-color: #ddd; margin: 0 10px 7px 0; }
.receive .sel { box-shadow: 2px 0 0 2px #0a72d8; }

.inner { flex: 1; min-width: 0; display: flex; flex-direction: column; }
.under { height: 7px; background: linear-gradient(#fff 2px, #a8b7c8 2px, #a8b7c8 4px, #fff 4px); }

/* analyser application */
.app { flex: 1; position: relative; display: flex; flex-direction: column; border: 1px solid #444; border-top-width: 2px; font-family: "Liberation Mono", "Courier New", monospace; font-size: 11px;
  background: linear-gradient(51deg, #66ccee 42px, #77ccee 42px 87px, #88ccee 87px 141px, #99ccee 141px 150px, #99ddee 150px 172px, #99ddff 172px 205px, #aaddff 205px 240px, #bbddff 240px 281px, #cceeff 281px 329px, #ccddff 329px 339px, #bbddff 339px 430px, #aaddee 430px 516px, #99ddee 516px 526px, #99ccee 526px 570px, #88ccee 570px 640px, #77ccee 640px 745px, #88ccee 745px 820px, #99ccee 820px 850px, #99ddee 850px 918px, #aaddee 918px 935px, #aaddff 935px 986px, #bbddff 986px 1062px, #cceeff 1062px 1100px, #ccddff 1100px 1106px, #aaddff 1106px 1150px, #bbddff 1150px 1249px, #99ddee 1249px 1273px, #99ccee 1273px 1300px, #88ccee 1300px 1350px, #77ccee 1350px 1410px, #66ccee 1410px); }
.head { height: 78px; flex: none; display: flex; background: linear-gradient(#b8f4ff 0 2px, #5ab8dc 2px, #45aee0 12px, #22a2ee 16px, #0a98ee 30px, #0a84cc 45px, #045a9c 62px, #024077 73px, #012040); }
.logo { width: 194px; height: 74px; flex: none; }
.headmain { flex: 1; min-width: 0; margin-left: -3px; }
.crumb { margin: 0; padding: 5px 0 0 17px; height: 22px; line-height: 13px; color: #fff; }
.mainnav { display: grid; grid-template-columns: repeat(11, 1fr); gap: 2px; }
.mainnav button { height: 49px; border-radius: 4px; display: flex; flex-direction: column; align-items: center; justify-content: space-between; padding: 2px 0 1px; line-height: 13px; white-space: nowrap; position: relative; background: linear-gradient(#cfe6ff, #a9d3ff 16%, #88c6ff 20%, #8fcbff 40%, #a9dcff 45%, #b6e6ff 65%, #d5f8ff 80%, #e0fbff); }
.mainnav svg { width: 31px; height: 31px; }
.mainnav .on { background: linear-gradient(#566f92, #7294b4 30%, #86aac4 55%, #96b6c8 75%, #a2bccd); }
.mini { width: 18px; height: 18px; border: 2px solid #9ccbe8; background: linear-gradient(#a9cbe2 6px, #667f96 6px 8px, #b5d6ec 8px); margin: 4px 4px 0 124px; }
.marked { position: relative; }
.marked::after { content: ""; position: absolute; border: 5px solid #ee1c25; z-index: 2; }
.mainnav .marked::after { inset: -10px -8px -13px -9px; }
.subnav { height: 34px; flex: none; display: grid; grid-template-columns: repeat(10, 1fr); gap: 2px; padding: 3px 213px 2px 5px; border-bottom: 1px solid #9ccbe9; }
.subnav button, .glossy { border-radius: 4px; line-height: 13px; border: 1px solid #9ad0f4; background: linear-gradient(#bfe0ff, #a8d6ff 14%, #88c8ff 18%, #90ccff 42%, #acdfff 46%, #b7e8ff 68%, #ccf6ff 80%, #d6fbff); }
.subnav button { padding: 0 6px; }
.subnav .on { background: linear-gradient(#ffdcc0, #ffb98a 22%, #ffd2b2 48%, #ffe4d0 70%, #fff3ea); }
.subnav .marked::after { inset: -4px 0 -15px -1px; }

.work { flex: 1; display: flex; flex-direction: column; padding: 19px 46px 36px 31px; }
.list { flex: 1; background: #fff; border-left: 1px solid #777; border-top: 2px solid #777; position: relative; display: flex; flex-direction: column; min-height: 200px; }
.scroller { flex: 1; overflow: hidden; }
.list table { table-layout: fixed; border-collapse: collapse; width: 102.4%; color: #1a1a1a; }
.n { width: 4.33%; } .w { width: 8.66%; } .u { width: 9.16%; }
.list th { font-weight: 400; height: 15px; line-height: 14px; padding: 0; border-right: 1px solid #bbb; border-bottom: 1px solid #bbb; }
.list td { padding: 0 0 0 1px; height: 14px; line-height: 14px; white-space: nowrap; overflow: hidden; }
.rowmark { position: absolute; left: -5px; top: 47px; width: 372px; height: 29px; border: 5px solid #ee1c25; }
.hbar { display: flex; align-items: center; height: 13px; gap: 5px; padding: 0 4px 2px 3px; }
.hbar svg { width: 6px; height: 8px; fill: none; stroke: #333; stroke-width: 2; }
.track { flex: 1; }
.thumb { height: 10px; width: 90%; background: #c9c9c9; }

.query { border: 1px solid #5a94e4; border-radius: 4px; margin: 20px 12px 0 0; padding: 5px 10px 0 51px; height: 58px; display: flex; align-items: center; }
.query legend { padding: 0 1px; margin-left: -49px; line-height: 13px; }
.checks { display: grid; grid-template-columns: 154px 308px 1fr; row-gap: 7px; flex: 1; }
.query label { display: flex; align-items: center; gap: 1px; height: 14px; white-space: nowrap; }
.query input { appearance: none; width: 13px; height: 13px; background: #fff; border: 1px solid #8ab6f4; }
.query .datecheck { margin-right: 30px; }
.datecheck input:checked::before { content: "√"; display: block; line-height: 11px; margin-left: -3px; }
.pick { position: relative; width: 120px; height: 17px; margin-right: 9px; }
.pick select { appearance: none; width: 100%; height: 17px; border: 1px solid #78a8e6; border-radius: 0; background: #fff; padding-left: 1px; }
.pick::after { content: ""; position: absolute; right: 1px; top: 1px; width: 11px; height: 15px; border-right: 1px solid #555; border-bottom: 1px solid #555; pointer-events: none; background: linear-gradient(#000, #000) 2px 6px / 7px 1px no-repeat, linear-gradient(#000, #000) 3px 7px / 5px 1px no-repeat, linear-gradient(#000, #000) 4px 8px / 3px 1px no-repeat, linear-gradient(#000, #000) 5px 9px / 1px 1px no-repeat; }
.inquire { width: 68px; height: 30px; margin-left: 22px; }
.actions { display: flex; margin-top: 11px; gap: 235px; }
.group { display: flex; }
.group.small { gap: 8px; padding-top: 1px; }
.group.big { gap: 6px; }
.group button { height: 30px; width: 111px; }
.group.small button { width: 86px; }
.actions .marked::after { inset: -15px -7px -15px -6px; }
.sidetab { position: absolute; right: 0; bottom: 47px; width: 23px; height: 50px; }
.sidetab.small { width: 17px; height: 37px; bottom: 35px; }

.status { height: 22px; display: grid; grid-template-columns: 161fr 218fr 259fr 162fr 233fr 190fr 135fr; border-top: 2px solid #a4aeb8; border-bottom: 1px solid #d8f4ff; }
.status > * { border-left: 2px solid #c0c8d0; line-height: 19px; text-align: center; white-space: nowrap; min-width: 0; }
.status > :first-child { border-left: 0; }
.s1 { background: linear-gradient(51deg, #aaddee 60px, #bbe8ff 60px 110px, #bbddff 110px 150px, #cceeff 150px); }
.s2 { background: linear-gradient(51deg, #88ccee 30px, #77ccee 30px 60px, #66ccee 60px); }

/* Windows 10 taskbars */
.bar10 { background: #101010; color: #fff; display: flex; align-items: center; flex: none; }
.inner10 { height: 28px; }
.outer10 { height: 25px; }
.start { width: 34px; display: flex; justify-content: center; }
.searchbox { height: 28px; width: 205px; background: #fff; color: #222; display: flex; align-items: center; padding: 0 2px 0 9px; gap: 7px; }
.searchbox input { flex: 1; min-width: 0; border: 0; background: none; font-size: 11px; }
.searchbox input::placeholder { color: #333; opacity: 1; }
.apps { display: flex; height: 100%; }
.apps i { width: 34px; display: flex; align-items: center; justify-content: center; }
.apps svg { width: 16px; height: 16px; }
.apps .open { width: 35px; border-bottom: 1px solid #79b5e0; }
.apps .active { background: #444; }
.white { color: #fff; }
.tray { margin-left: auto; display: flex; align-items: center; gap: 5px; }
.tray time { font-size: 9px; line-height: 12px; text-align: center; width: 46px; white-space: nowrap; }
.bubble { margin: 0 12px 0 3px; }
.outer10 .tray { gap: 8px; padding-right: 8px; }
.outer10 .tray span + span { margin-left: 3px; }

/* Docklight, right strip */
.dockright { width: 57px; flex: none; position: relative; display: flex; flex-direction: column; padding-left: 2px; }
.closeline { height: 41px; border-bottom: 2px solid #ccc; padding: 3px 0 0 27px; flex: none; }
.closeline svg { width: 10px; height: 10px; stroke: #999; }
.lines { height: 24px; border-bottom: 2px solid #ccc; flex: none; }
.dockright p { margin: 0; font: 12px/16px "Liberation Sans", sans-serif; height: 64px; flex: none; white-space: nowrap; }
.vwell { flex: 1; border: 2px solid #777; border-left: 0; border-bottom-width: 1px; margin: 0 2px 11px 0; display: flex; flex-direction: column; align-items: flex-end; padding: 6px 1px 5px; }
.vwell > svg { width: 8px; height: 6px; margin-right: 3px; fill: none; stroke: #555; stroke-width: 2; }
.vtrack { flex: 1; display: flex; align-items: flex-end; padding: 5px 0; }
.vthumb { width: 14px; height: 55%; background: #a9a9a9; }

/* Windows 11 taskbar */
.bar11 { height: 48px; flex: none; display: flex; align-items: center; justify-content: space-between; background: linear-gradient(90deg, #dae3ef, #dce0ee 15%, #d8e1f0 25%, #d9e0f0 42%, #e5dcea 52%, #dddff0 72%, #e0deea); border-top: 1px solid #bbb; font-size: 12px; }
.weather { display: flex; width: 382px; padding-left: 18px; gap: 5px; align-items: center; line-height: 16px; }
.weather small { display: block; font-size: 11px; color: #555; }
.dock { display: flex; gap: 4px; flex: none; }
.dock i { width: 40px; height: 40px; border-radius: 4px; display: flex; align-items: center; justify-content: center; position: relative; }
.dock svg { width: 24px; height: 24px; }
.run::after { content: ""; position: absolute; bottom: 1px; left: 17px; width: 6px; height: 3px; border-radius: 2px; background: #85858d; }
.line { background: #fde4e5; }
.line::after { background: #c42b1c; }
.tray11 { display: flex; align-items: center; width: 382px; justify-content: flex-end; gap: 8px; padding-right: 21px; }
.tray11 time { text-align: right; line-height: 16px; margin-left: 7px; width: 64px; }
.lang { margin: 0 10px 0 12px; }
```
